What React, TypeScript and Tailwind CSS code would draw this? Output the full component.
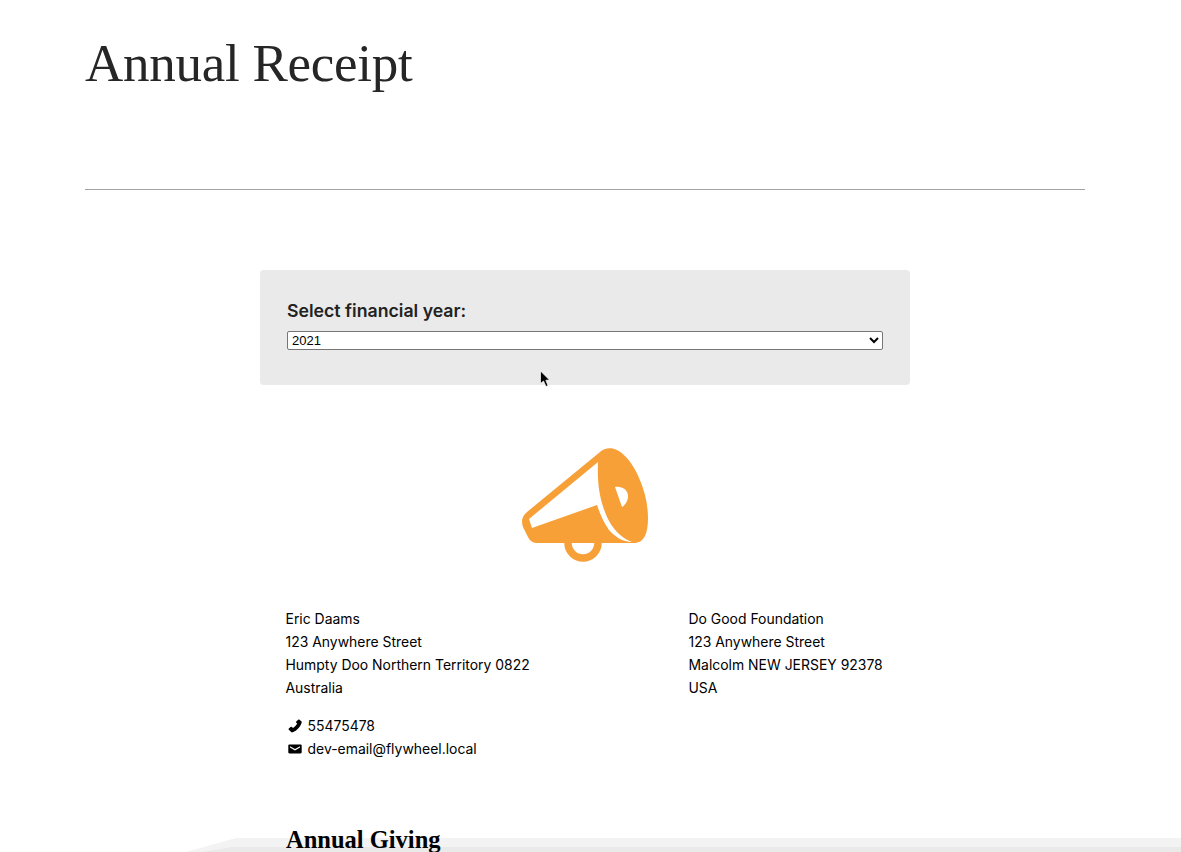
import React from "react";

const serif = "font-['Liberation_Serif',serif]";

function Megaphone() {
  return (
    <svg width="128" height="116" viewBox="0 0 128 116" className="block" aria-hidden="true">
      <circle cx="62" cy="96" r="15" fill="none" stroke="#F6A037" strokeWidth="7.500" />
      <path
        fill="#F6A037"
        d="M79 5 C83 1 90 0 96 3 C108 9 119 28 124 48 C128 64 128 80 124 89 C121 94 118 96 113 96 L17 96 C12 96 9 94 7 90 L2 80 C0 74 1 69 6 65 Z"
      />
      <path
        fill="#fff"
        d="M77 15 C76 38 79 54 86 70 C91 81 100 91 111 95 C102 95 94 90 88 83 C83 76 79 67 76 58 L11 81 L8 72 Z"
      />
      <path fill="#fff" d="M94 40 C101 39 107 43 107 49 C107 54 104 58 101 60 Z" />
    </svg>
  );
}

function Phone() {
  return (
    <svg width="14" height="14" viewBox="0 0 14 14" aria-hidden="true">
      <path
        fill="#000"
        d="M11.200 .6 L13.300 2.200 C13.800 2.600 13.900 3 13.700 3.600 C12.600 7.800 9 11.800 4.700 13.300 C4.100 13.500 3.600 13.400 3.200 13 L.8 10.800 C.4 10.400 .4 9.900 .8 9.500 L2.600 8 C3 7.700 3.500 7.700 3.900 8 L5 9 C6.800 8 8.300 6.300 9.200 4.600 L8.300 3.700 C7.900 3.300 7.900 2.800 8.200 2.400 L10.200 .7 C10.500 .4 10.900 .4 11.200 .6 Z"
      />
    </svg>
  );
}

function Mail() {
  return (
    <svg width="14" height="14" viewBox="0 0 14 14" aria-hidden="true">
      <path
        fill="#000"
        d="M1.500 2.500 H12.500 C13.200 2.500 13.700 3 13.700 3.700 V10.300 C13.700 11 13.200 11.500 12.500 11.500 H1.500 C.8 11.500 .3 11 .3 10.300 V3.700 C.3 3 .8 2.500 1.500 2.500 Z M2 4.300 V5.600 L7 8.500 L12 5.600 V4.300 L7 7.100 Z"
        fillRule="evenodd"
      />
    </svg>
  );
}

export default function App() {
  return (
    <div className="relative h-[852px] w-[1181px] overflow-hidden bg-white font-['Inter',sans-serif] text-black">
      {/* faded sheet edge along the bottom of the frame */}
      <div className="absolute bottom-0 left-[186px] right-0 h-[14px] bg-[#f3f3f3] [clip-path:polygon(0_100%,50px_0,100%_0,100%_100%)]">
        <div className="absolute bottom-0 left-[16px] right-0 h-[5px] bg-[#eaeaea] [clip-path:polygon(0_100%,30px_0,100%_0,100%_100%)]" />
      </div>

      <div className="relative ml-[85px] w-[1000px]">
        <h1 className={`${serif} pt-[30px] text-[53px] font-normal leading-[66px] tracking-[-0.27px] text-[#262626]`}>
          Annual Receipt
        </h1>
        <div className="mt-[93px] h-px w-full bg-[#a3a3a3]" />

        <div className="mx-auto mt-[80px] h-[115px] w-[650px] rounded-[4px] bg-[#eaeaea] px-[27px] pt-[30px]">
          <div className="text-[17.7px] font-semibold leading-[21px] text-[#222]">Select financial year:</div>
          <select
            defaultValue="2021"
            className="mt-[10px] block h-[19px] w-[596px] rounded-[2px] border border-[#767676] bg-white font-['Liberation_Sans',sans-serif] text-[13px] leading-[17px] text-black [appearance:auto]"
          >
            <option>2021</option>
          </select>
        </div>

        <div className="mt-[62px] flex justify-center">
          <Megaphone />
        </div>

        <div className="mx-auto mt-[44px] grid w-[650px] grid-cols-[403px_1fr] pl-[25.5px] text-[13.95px] leading-[23px]">
          <div>
            <div>Eric Daams</div>
            <div>123 Anywhere Street</div>
            <div>Humpty Doo Northern Territory 0822</div>
            <div>Australia</div>
            <div className="mt-[15px] flex items-center gap-[6px] pl-[2px]">
              <Phone />
              <span>55475478</span>
            </div>
            <div className="flex items-center gap-[6px] pl-[2px]">
              <Mail />
              <span>dev-email@flywheel.local</span>
            </div>
          </div>
          <div>
            <div>Do Good Foundation</div>
            <div>123 Anywhere Street</div>
            <div>Malcolm NEW JERSEY 92378</div>
            <div>USA</div>
          </div>
        </div>

        <h2 className={`${serif} mx-auto mt-[65px] w-[650px] pl-[26px] text-[24.5px] font-bold leading-[30px] text-black`}>
          Annual Giving
        </h2>
      </div>

      {/* mouse pointer */}
      <svg width="12" height="18" viewBox="0 0 12 18" className="absolute left-[539px] top-[370px] z-20" aria-hidden="true">
        <path d="M1.500 1 L1.500 13.500 L4.500 11 L7 16.500 L9 15.500 L6.800 10.300 L10.500 10 Z" fill="#000" stroke="#fff" strokeWidth="0.700" />
      </svg>
    </div>
  );
}
